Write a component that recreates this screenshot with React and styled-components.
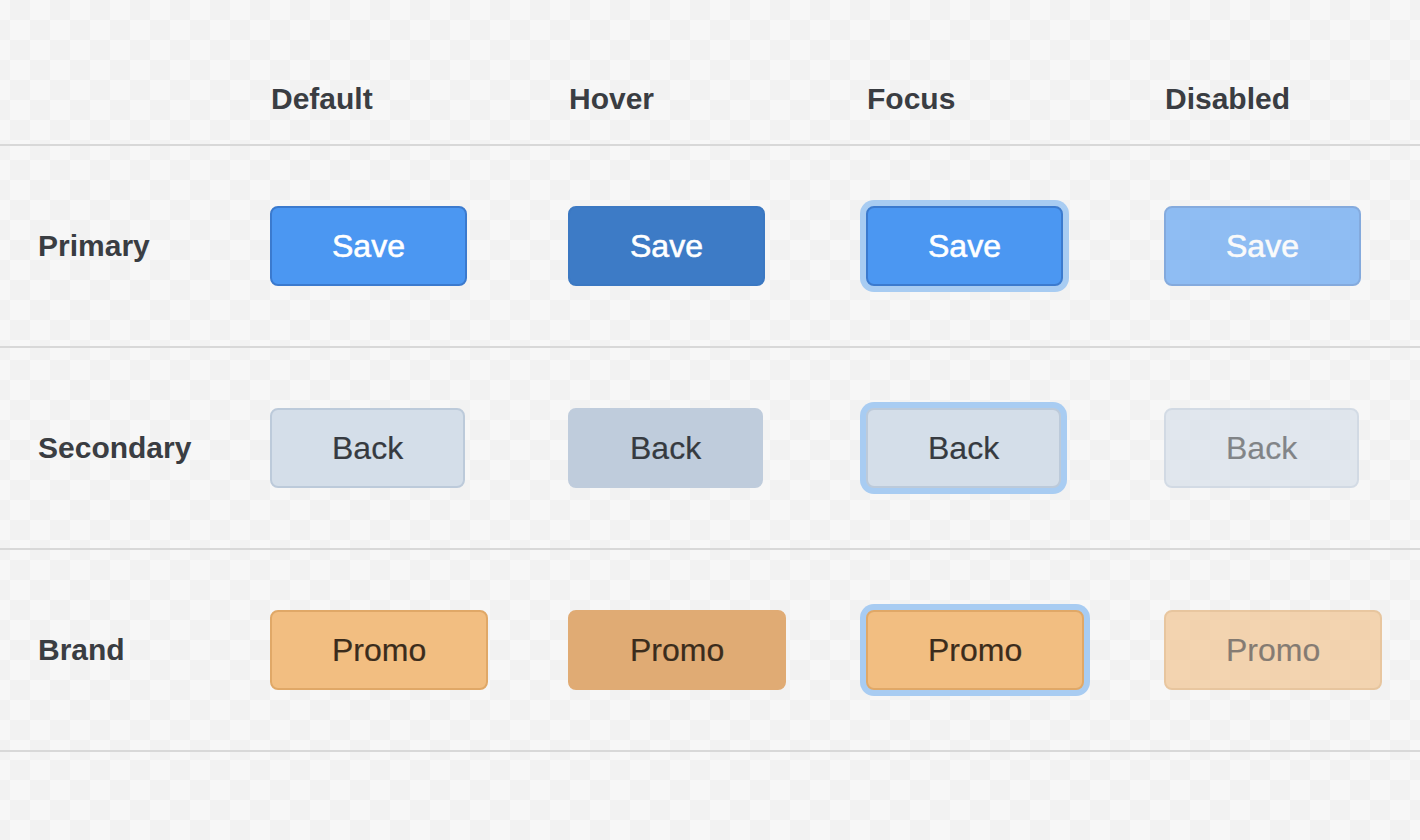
import React from 'react'
import styled, { createGlobalStyle, css } from 'styled-components'

const GlobalStyle = createGlobalStyle`
  html, body {
    margin: 0;
    padding: 0;
  }
  body {
    font-family: "Liberation Sans", Arial, Helvetica, sans-serif;
    color: #3a3d42;
  }
`

const variants = {
  primary: {
    bg: '#4b97f2',
    border: '#3b7ace',
    color: '#ffffff',
    hoverBg: '#3d7bc6',
    hoverBorder: '#3b78c2',
    stroke: 0.6,
  },
  secondary: {
    bg: '#d4dee9',
    border: '#bccada',
    color: '#363a40',
    hoverBg: '#bfccdc',
    hoverBorder: '#bfccdc',
    stroke: 0.2,
  },
  brand: {
    bg: '#f2be81',
    border: '#e0a867',
    color: '#3b2c1c',
    hoverBg: '#e0ab74',
    hoverBorder: '#e0ab74',
    stroke: 0.2,
  },
}

const Page = styled.main`
  min-height: 100vh;
  background-color: #f7f7f7;
  background-image: repeating-conic-gradient(#f2f2f2 0 25%, #f7f7f7 0 50%);
  background-size: 40px 40px;
  background-position: -10px 0;
`

const Row = styled.div`
  display: grid;
  grid-template-columns: 232px repeat(4, 298px) 1fr;
  align-items: center;
  padding-left: 38px;
  height: 200px;
  border-bottom: 2px solid #d8d8d8;
`

const HeadRow = styled(Row)`
  align-items: end;
  padding-bottom: 30px;
  box-sizing: border-box;
  height: 146px;
`

const Heading = styled.div`
  font-size: 30px;
  line-height: 30px;
  font-weight: 700;
  color: #3a3d42;
  padding-left: 1px;
`

const Label = styled(Heading)`
  padding-left: 0;
`

const Button = styled.button`
  justify-self: start;
  height: 80px;
  padding: 0 60px;
  border-radius: 8px;
  border: 2px solid ${(p) => variants[p.$variant].border};
  background: ${(p) => variants[p.$variant].bg};
  color: ${(p) => variants[p.$variant].color};
  -webkit-text-stroke: ${(p) => variants[p.$variant].stroke}px currentColor;
  font-family: "Liberation Sans", Arial, Helvetica, sans-serif;
  font-size: 32px;
  font-weight: 400;
  line-height: 1;
  cursor: pointer;
  outline: none;

  ${(p) =>
    p.$state === 'hover' &&
    css`
      background: ${variants[p.$variant].hoverBg};
      border-color: ${variants[p.$variant].hoverBorder};
    `}

  ${(p) =>
    p.$state === 'focus' &&
    css`
      box-shadow: 0 0 0 6px #a8ccf2;
    `}

  ${(p) =>
    p.$state === 'disabled' &&
    css`
      opacity: 0.6;
      cursor: default;
    `}
`

const states = ['default', 'hover', 'focus', 'disabled']

const rows = [
  { name: 'Primary', variant: 'primary', text: 'Save' },
  { name: 'Secondary', variant: 'secondary', text: 'Back' },
  { name: 'Brand', variant: 'brand', text: 'Promo' },
]

export default function App() {
  return (
    <Page>
      <GlobalStyle />
      <HeadRow>
        <span />
        <Heading>Default</Heading>
        <Heading>Hover</Heading>
        <Heading>Focus</Heading>
        <Heading>Disabled</Heading>
      </HeadRow>
      {rows.map((row) => (
        <Row key={row.name}>
          <Label>{row.name}</Label>
          {states.map((state) => (
            <Button
              key={state}
              $variant={row.variant}
              $state={state}
              disabled={state === 'disabled'}
              tabIndex={-1}
            >
              {row.text}
            </Button>
          ))}
        </Row>
      ))}
    </Page>
  )
}
